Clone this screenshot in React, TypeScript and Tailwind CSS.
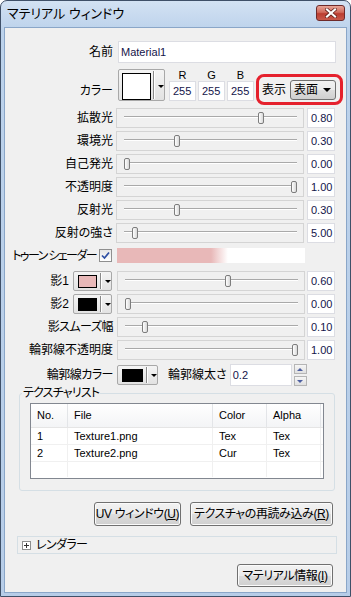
const FONT =
  "font-['Liberation_Sans','Noto_Sans_CJK_JP',sans-serif] [font-feature-settings:'palt']";

const BTN =
  "flex items-center justify-center whitespace-nowrap rounded-[3px] border border-[#707070] bg-[linear-gradient(#f2f2f2_0%,#ebebeb_50%,#dddddd_51%,#cfcfcf_100%)] shadow-[inset_0_0_0_1px_#fbfbfb] text-[12px] tracking-[-0.4px]";

function Slider({ v }: { v: number }) {
  return (
    <div className="relative h-[20px] w-[188px] border border-[#d4d4d4] bg-[#f0f0f0]">
      <div className="absolute left-[7px] right-[6px] top-[7px] h-[2px] border-t border-b border-t-[#a9a9a9] border-b-white" />
      <div
        className="absolute top-[3px] h-[12px] w-[6px] rounded-[2px] border border-[#7d7d7d] bg-[linear-gradient(to_right,#ffffff,#d8d8d8)]"
        style={{ left: 7 + v * 167 }}
      />
    </div>
  );
}

function Val({ t, className = "" }: { t: string; className?: string }) {
  return (
    <div
      className={`flex h-[20px] w-[28px] items-center border border-[#dcdde3] bg-white pl-[3px] text-[11px] text-[#14144a] ${className}`}
    >
      {t}
    </div>
  );
}

function Arrow() {
  return (
    <div className="h-0 w-0 border-x-[3px] border-t-[3px] border-x-transparent border-t-black" />
  );
}

function Swatch({ color, className = "" }: { color: string; className?: string }) {
  return (
    <div
      className={`flex h-[20px] w-[39px] items-center rounded-[2px] border border-[#a8a8a8] bg-[linear-gradient(#f4f4f4,#e2e2e2)] pl-[4px] ${className}`}
    >
      <div className="h-[13px] w-[21px] border border-black" style={{ background: color }} />
      <div className="ml-[3px] h-[16px] w-[2px] border-l border-r border-l-[#8a8a8a] border-r-white" />
      <div className="ml-[3px]">
        <Arrow />
      </div>
    </div>
  );
}

function Row({ label, v, val }: { label: string; v: number; val: string }) {
  return (
    <div className="mt-[3px] flex h-[20px] items-center">
      <div className="w-[108px] whitespace-nowrap text-right text-[12px] leading-[16px]">{label}</div>
      <div className="ml-[3px]">
        <Slider v={v} />
      </div>
      <Val t={val} className="ml-[3px]" />
    </div>
  );
}

function ColorRow({ label, color, v, val }: { label: string; color: string; v: number; val: string }) {
  return (
    <div className="mt-[3px] flex h-[20px] items-center">
      <div className="w-[64px] text-right text-[12px] leading-[16px]">{label}</div>
      <Swatch color={color} className="ml-[4px]" />
      <div className="ml-[5px]">
        <Slider v={v} />
      </div>
      <Val t={val} className="ml-[2px]" />
    </div>
  );
}

export default function App() {
  return (
    <div
      className={`${FONT} flex h-[597px] w-[351px] flex-col rounded-t-[7px] border border-[#3f5068] bg-[linear-gradient(#d3e2f3,#bcd2eb_30px,#b7cde8)] text-black`}
    >
      {/* title bar */}
      <div className="flex h-[26px] items-start">
        <div className="ml-[6px] mt-[5px] text-[13px] leading-[16px]">マテリアル ウィンドウ</div>
        <div className="ml-auto mr-[5px] mt-[4px] flex h-[16px] w-[29px] items-center justify-center rounded-[3px] border border-[#6e2a2a] bg-[linear-gradient(#e8a597,#d06a5c_45%,#bb3d30_55%,#c8594b)]">
          <svg width="12" height="10" viewBox="0 0 12 10">
            <path d="M2 1.5 L10 8.5 M10 1.5 L2 8.5" stroke="#5a1b16" strokeWidth="3.6" strokeLinecap="square" />
            <path d="M2 1.5 L10 8.5 M10 1.5 L2 8.5" stroke="#ffffff" strokeWidth="2.2" strokeLinecap="square" />
          </svg>
        </div>
      </div>

      {/* client */}
      <div className="mx-[3px] mb-[3px] flex flex-1 flex-col border border-[#8aa6c8] bg-[#f0f0f0]">
        <div className="mt-[13px] flex items-center">
          <div className="w-[108px] text-right text-[12px] leading-[16px]">名前</div>
          <div className="ml-[5px] flex h-[22px] w-[218px] items-center border border-[#dcdde3] bg-white pl-[2px] text-[11px] text-[#14144a]">
            Material1
          </div>
        </div>

        <div className="mt-[6px] flex items-start">
          <div className="mt-[14px] w-[108px] text-right text-[12px] leading-[16px]">カラー</div>
          <div className="ml-[5px] flex h-[32px] w-[47px] items-center rounded-[2px] border border-[#a8a8a8] bg-[linear-gradient(#f4f4f4,#e2e2e2)] pl-[3px]">
            <div className="mt-[2px] h-[27px] w-[30px] border border-black bg-white" />
            <div className="ml-[2px] h-[28px] w-[2px] border-l border-r border-l-[#8a8a8a] border-r-white" />
            <div className="ml-[3px] mt-[2px]">
              <Arrow />
            </div>
          </div>
          <div className="ml-[4px] flex gap-[2px]">
            {["R", "G", "B"].map((c) => (
              <div key={c} className="flex w-[27px] flex-col items-center">
                <div className="h-[12px] text-[11px] leading-[12px]">{c}</div>
                <div className="flex h-[20px] w-[27px] items-center border border-[#dcdde3] bg-white pl-[3px] text-[11px] text-[#14144a]">
                  255
                </div>
              </div>
            ))}
          </div>
          <div className="ml-[2px] mt-[5px] flex h-[31px] w-[87px] items-center rounded-[8px] border-[3px] border-[#e5212d] pl-[3px]">
            <div className="text-[12px] leading-[16px]">表示</div>
            <div className="ml-[4px] flex h-[20px] w-[46px] items-center rounded-[3px] border border-[#707070] bg-[linear-gradient(#f2f2f2_0%,#ebebeb_50%,#dddddd_51%,#cfcfcf_100%)] pl-[3px] text-[12px]">
              表面
              <div className="ml-auto mr-[4px]">
                <div className="h-0 w-0 border-x-[4px] border-t-[4px] border-x-transparent border-t-black" />
              </div>
            </div>
          </div>
        </div>

        <Row label="拡散光" v={0.8} val="0.80" />
        <Row label="環境光" v={0.3} val="0.30" />
        <Row label="自己発光" v={0} val="0.00" />
        <Row label="不透明度" v={1} val="1.00" />
        <Row label="反射光" v={0.3} val="0.30" />
        <Row label="反射の強さ" v={0.05} val="5.00" />

        <div className="mt-[5px] flex h-[15px] items-center">
          <div className="flex w-[107px] items-center justify-end">
            <div className="whitespace-nowrap text-[12px] leading-[16px] tracking-[-1.6px]">トゥーン シェーダー</div>
            <div className="ml-[3px] flex h-[13px] w-[13px] shrink-0 items-center justify-center border border-[#8f8f8f] bg-[linear-gradient(#e6e6e6,#ffffff)]">
              <svg width="9" height="9" viewBox="0 0 9 9">
                <path d="M1 4.5 L3.5 7 L8 1.5" stroke="#2e4fa3" strokeWidth="1.7" fill="none" />
              </svg>
            </div>
          </div>
          <div className="ml-[5px] h-[15px] w-[188px] bg-[linear-gradient(to_right,#e8b8b8_50%,#ffffff_59%)]" />
        </div>

        <div className="mt-[5px]" />
        <ColorRow label="影1" color="#e8b8b8" v={0.6} val="0.60" />
        <ColorRow label="影2" color="#000000" v={0} val="0.00" />

        <div className="mt-[3px] flex h-[20px] items-center">
          <div className="w-[108px] whitespace-nowrap text-right text-[12px] leading-[16px] tracking-[-0.5px]">影スムーズ幅</div>
          <div className="ml-[4px]">
            <Slider v={0.1} />
          </div>
          <Val t="0.10" className="ml-[2px]" />
        </div>
        <div className="mt-[3px] flex h-[20px] items-center">
          <div className="w-[108px] whitespace-nowrap text-right text-[12px] leading-[16px]">輪郭線不透明度</div>
          <div className="ml-[4px]">
            <Slider v={1} />
          </div>
          <Val t="1.00" className="ml-[2px]" />
        </div>

        <div className="mt-[4px] flex h-[22px] items-center">
          <div className="w-[108px] whitespace-nowrap text-right text-[12px] leading-[16px] tracking-[-0.5px]">輪郭線カラー</div>
          <Swatch color="#000000" className="ml-[4px] w-[41px]" />
          <div className="ml-[10px] whitespace-nowrap text-[12px] leading-[16px]">輪郭線太さ</div>
          <div className="ml-[3px] flex h-[22px] w-[62px] items-center border border-[#dcdde3] bg-white pl-[2px] text-[11px] text-[#14144a]">
            0.2
          </div>
          <div className="ml-[2px] flex h-[22px] flex-col justify-between">
            <div className="flex h-[10px] w-[13px] items-center justify-center border border-[#b5b5b5] bg-[linear-gradient(#f6f6f6,#e0e0e0)]">
              <div className="h-0 w-0 border-x-[3px] border-b-[3px] border-x-transparent border-b-[#4d5fa0]" />
            </div>
            <div className="flex h-[10px] w-[13px] items-center justify-center border border-[#b5b5b5] bg-[linear-gradient(#f6f6f6,#e0e0e0)]">
              <div className="h-0 w-0 border-x-[3px] border-t-[3px] border-x-transparent border-t-[#4d5fa0]" />
            </div>
          </div>
        </div>

        <fieldset className="ml-[14px] w-[316px] rounded-[3px] border border-[#d5dfe5] px-[10px] pb-[11px]">
          <legend className="-ml-[8px] px-[1px] text-[12px] leading-[14px] tracking-[-0.8px]">テクスチャリスト</legend>
          <div className="mt-[3px] h-[76px] border border-[#828790] bg-white text-[11px]">
            <div className="flex h-[24px] items-center border-b border-[#e5e5e5] bg-[linear-gradient(#ffffff,#f3f4f6)]">
              <div className="flex h-full w-[37px] items-center border-r border-[#e3e5e8] pl-[6px]">No.</div>
              <div className="flex h-full w-[145px] items-center border-r border-[#e3e5e8] pl-[6px]">File</div>
              <div className="flex h-full w-[54px] items-center border-r border-[#e3e5e8] pl-[6px]">Color</div>
              <div className="flex h-full w-[54px] items-center border-r border-[#e3e5e8] pl-[6px]">Alpha</div>
            </div>
            {[
              ["1", "Texture1.png", "Tex", "Tex"],
              ["2", "Texture2.png", "Cur", "Tex"],
              ["", "", "", ""],
            ].map((r, i) => (
              <div key={i} className={`flex ${i === 2 ? "h-[15px]" : "h-[17px] border-b border-[#f0f0f0]"}`}>
                <div className="flex w-[37px] items-center border-r border-[#f0f0f0] pl-[6px]">{r[0]}</div>
                <div className="flex w-[145px] items-center border-r border-[#f0f0f0] pl-[6px]">{r[1]}</div>
                <div className="flex w-[54px] items-center border-r border-[#f0f0f0] pl-[6px]">{r[2]}</div>
                <div className="flex w-[54px] items-center border-r border-[#f0f0f0] pl-[6px]">{r[3]}</div>
              </div>
            ))}
          </div>
        </fieldset>

        <div className="mr-[13px] mt-[11px] flex justify-end gap-[9px]">
          <div className={`${BTN} h-[24px] w-[87px]`}>
            UV ウィンドウ(<span className="underline">U</span>)
          </div>
          <div className={`${BTN} h-[24px] w-[143px]`}>
            テクスチャの再読み込み(<span className="underline">R</span>)
          </div>
        </div>

        <div className="ml-[12px] mt-[10px] flex h-[18px] w-[320px] items-center border border-[#d5dfe5]">
          <div className="ml-[4px] flex h-[9px] w-[9px] items-center justify-center border border-[#8e8f8f] bg-white">
            <svg width="5" height="5" viewBox="0 0 5 5">
              <path d="M0 2.5 H5 M2.5 0 V5" stroke="#333" strokeWidth="1" />
            </svg>
          </div>
          <div className="ml-[5px] text-[12px] leading-[16px] tracking-[-0.6px]">レンダラー</div>
        </div>

        <div className="mr-[13px] mt-[10px] flex justify-end">
          <div className={`${BTN} h-[23px] w-[96px]`}>
            マテリアル情報(<span className="underline">I</span>)
          </div>
        </div>
      </div>
    </div>
  );
}
